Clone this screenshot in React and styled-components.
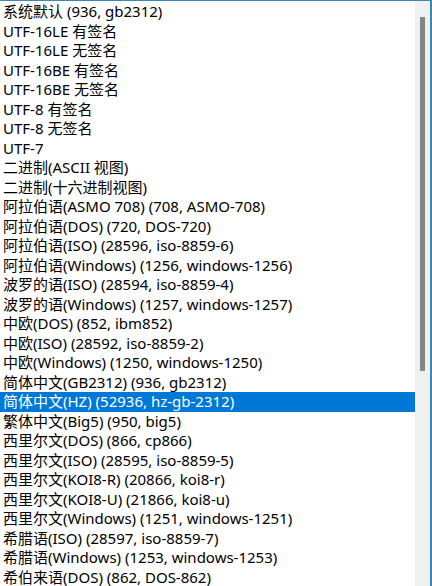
import React from 'react';
import styled, { createGlobalStyle } from 'styled-components';

const GlobalStyle = createGlobalStyle`
  html, body {
    margin: 0;
    padding: 0;
    background: #ffffff;
  }
`;

const encodings = [
  '系统默认 (936, gb2312)',
  'UTF-16LE 有签名',
  'UTF-16LE 无签名',
  'UTF-16BE 有签名',
  'UTF-16BE 无签名',
  'UTF-8 有签名',
  'UTF-8 无签名',
  'UTF-7',
  '二进制(ASCII 视图)',
  '二进制(十六进制视图)',
  '阿拉伯语(ASMO 708) (708, ASMO-708)',
  '阿拉伯语(DOS) (720, DOS-720)',
  '阿拉伯语(ISO) (28596, iso-8859-6)',
  '阿拉伯语(Windows) (1256, windows-1256)',
  '波罗的语(ISO) (28594, iso-8859-4)',
  '波罗的语(Windows) (1257, windows-1257)',
  '中欧(DOS) (852, ibm852)',
  '中欧(ISO) (28592, iso-8859-2)',
  '中欧(Windows) (1250, windows-1250)',
  '简体中文(GB2312) (936, gb2312)',
  '简体中文(HZ) (52936, hz-gb-2312)',
  '繁体中文(Big5) (950, big5)',
  '西里尔文(DOS) (866, cp866)',
  '西里尔文(ISO) (28595, iso-8859-5)',
  '西里尔文(KOI8-R) (20866, koi8-r)',
  '西里尔文(KOI8-U) (21866, koi8-u)',
  '西里尔文(Windows) (1251, windows-1251)',
  '希腊语(ISO) (28597, iso-8859-7)',
  '希腊语(Windows) (1253, windows-1253)',
  '希伯来语(DOS) (862, DOS-862)',
];

const SELECTED = 20;

const ListBox = styled.div`
  display: flex;
  width: 432px;
  height: 586px;
  box-sizing: border-box;
  border-top: 1px solid #3d88ad;
  border-right: 2px solid #3d88ad;
  overflow: hidden;
  background: #ffffff;
`;

const Items = styled.ul`
  flex: 1;
  margin: 0;
  padding: 1px 0 0;
  list-style: none;
  overflow: hidden;
`;

const Item = styled.li`
  height: 19.5px;
  line-height: 19.5px;
  padding-left: 3px;
  white-space: nowrap;
  font-family: "Noto Sans", "Noto Sans CJK SC", sans-serif;
  font-size: 15px;
  color: ${(props) => props.selected ? '#ffffff' : '#000000'};
  background: ${(props) => props.selected ? '#0078d7' : 'transparent'};
`;

const Track = styled.div`
  width: 15px;
  flex-shrink: 0;
  background: #f0f0f0;
  padding-top: 16px;
  box-sizing: border-box;
`;

const Thumb = styled.div`
  width: 5px;
  height: 354px;
  margin-left: 5px;
  background: #858585;
`;

const App = () => (
  <>
    <GlobalStyle />
    <ListBox>
      <Items>
        {encodings.map((name, i) => (
          <Item key={name} selected={i === SELECTED}>{name}</Item>
        ))}
      </Items>
      <Track>
        <Thumb />
      </Track>
    </ListBox>
  </>
);

export default App;
